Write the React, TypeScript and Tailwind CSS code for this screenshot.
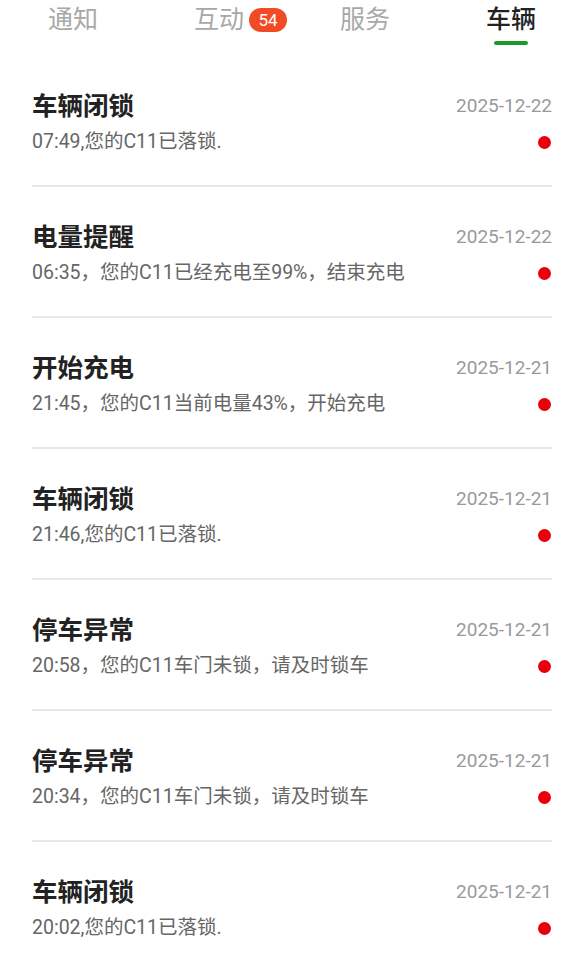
import React from 'react';

const tabs = ['通知', '互动', '服务', '车辆'];

const items = [
  { title: '车辆闭锁', desc: '07:49,您的C11已落锁.', date: '2025-12-22' },
  { title: '电量提醒', desc: '06:35，您的C11已经充电至99%，结束充电', date: '2025-12-22' },
  { title: '开始充电', desc: '21:45，您的C11当前电量43%，开始充电', date: '2025-12-21' },
  { title: '车辆闭锁', desc: '21:46,您的C11已落锁.', date: '2025-12-21' },
  { title: '停车异常', desc: '20:58，您的C11车门未锁，请及时锁车', date: '2025-12-21' },
  { title: '停车异常', desc: '20:34，您的C11车门未锁，请及时锁车', date: '2025-12-21' },
  { title: '车辆闭锁', desc: '20:02,您的C11已落锁.', date: '2025-12-21' },
];

export default function App() {
  return (
    <div className="w-[584px] h-[960px] overflow-hidden bg-white font-['Roboto','Noto_Sans_CJK_SC',sans-serif]">
      <div className="grid grid-cols-4 h-[56px]">
        {tabs.map((t, i) => (
          <div key={t} className="flex flex-col items-center">
            <div className="relative pt-[1px]">
              <span
                className={`block text-[25px] leading-[38px] ${
                  i === 3 ? 'text-[#222222] font-medium' : 'text-[#a8a8a8]'
                }`}
              >
                {t}
              </span>
              {i === 1 && (
                <span className="absolute left-[55px] top-[8px] h-[24px] w-[38px] rounded-full bg-[#f04b25] text-white text-[17px] leading-[24px] text-center">
                  54
                </span>
              )}
            </div>
            {i === 3 && <div className="mt-[2px] h-[4px] w-[34px] rounded-full bg-[#1c9a2c]" />}
          </div>
        ))}
      </div>

      <div className="px-8">
        {items.map((it, idx) => (
          <div key={idx} className="pt-[34px] border-b-2 border-[#e8e8e8]">
            <div className="flex items-center justify-between">
              <span className="text-[25.5px] leading-[32px] font-bold text-[#222222]">{it.title}</span>
              <span className="text-[19px] leading-[32px] text-[#9a9a9a]">{it.date}</span>
            </div>
            <div className="mt-[6px] pb-[29px] flex items-center justify-between">
              <span className="text-[19.5px] leading-[28px] text-[#666666]">{it.desc}</span>
              <span className="mr-[1px] h-[13px] w-[13px] rounded-full bg-[#e8000b]" />
            </div>
          </div>
        ))}
      </div>
    </div>
  );
}
